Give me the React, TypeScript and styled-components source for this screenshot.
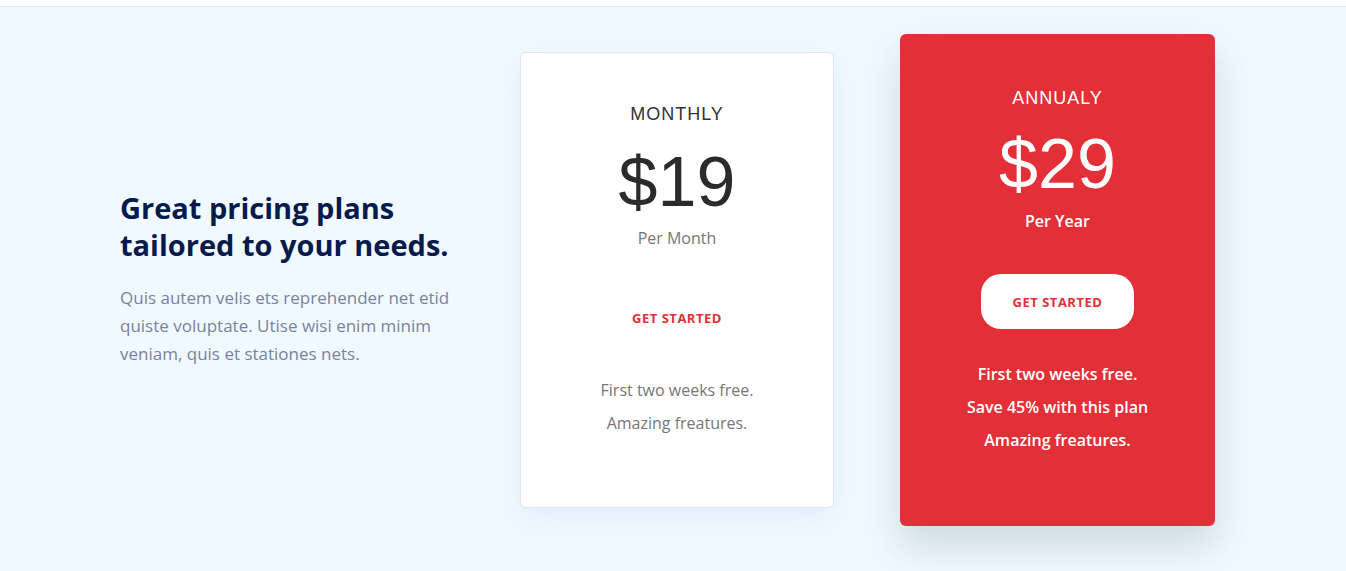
import { createGlobalStyle } from "styled-components";
import styled from "styled-components";

const GlobalStyle = createGlobalStyle`
  * {
    box-sizing: border-box;
  }
  body {
    margin: 0;
    background-color: #f0f9ff;
    font-family: "Open Sans", sans-serif;
  }
`;

const TopBar = styled.div`
  height: 7px;
  background-color: #ffffff;
  border-bottom: 1px solid #e6ebf0;
`;

const Section = styled.section`
  background-color: #f0f9ff;
  padding: 27px 0 60px;
`;

const Container = styled.div`
  display: flex;
  align-items: center;
  padding-left: 120px;
`;

const Intro = styled.div`
  width: 350px;
  margin-right: 50px;
  padding-bottom: 4px;
`;

const Heading = styled.h2`
  max-width: 345px;
  margin: 0 0 21px;
  font-family: "Open Sans", sans-serif;
  font-size: 29px;
  font-weight: 700;
  line-height: 37px;
  color: #061a4c;
`;

const Lead = styled.p`
  margin: 0;
  font-size: 17px;
  line-height: 28px;
  color: #7c819b;
`;

const Cards = styled.div`
  display: flex;
  align-items: center;
  gap: 66px;
`;

const Card = styled.div<{ $featured?: boolean }>`
  width: ${(p) => (p.$featured ? "315px" : "314px")};
  display: flex;
  flex-direction: column;
  align-items: center;
  text-align: center;
  padding: ${(p) => (p.$featured ? "52px 30px 69px" : "49px 30px 67px")};
  border-radius: 6px;
  background-color: ${(p) => (p.$featured ? "#e32f37" : "#ffffff")};
  border: ${(p) => (p.$featured ? "none" : "1px solid #dbe6f2")};
  box-shadow: ${(p) =>
    p.$featured
      ? "0 20px 40px rgba(40, 70, 90, 0.18)"
      : "0 10px 30px rgba(120, 160, 210, 0.12)"};
  color: ${(p) => (p.$featured ? "#ffffff" : "#777777")};
`;

const PlanName = styled.div<{ $featured?: boolean }>`
  font-family: "Liberation Sans", Arial, sans-serif;
  font-size: 18px;
  line-height: 24px;
  letter-spacing: 1px;
  color: ${(p) => (p.$featured ? "#ffffff" : "#333333")};
`;

const Price = styled.div<{ $featured?: boolean }>`
  margin-top: ${(p) => (p.$featured ? "14px" : "16px")};
  font-family: "Liberation Sans", Arial, sans-serif;
  font-size: 70px;
  line-height: 80px;
  color: ${(p) => (p.$featured ? "#ffffff" : "#2b2b2b")};
`;

const Period = styled.div<{ $featured?: boolean }>`
  margin-top: ${(p) => (p.$featured ? "5px" : "4px")};
  font-size: 16px;
  line-height: 24px;
  font-weight: ${(p) => (p.$featured ? 600 : 400)};
`;

const StartButton = styled.button<{ $featured?: boolean }>`
  margin-top: ${(p) => (p.$featured ? "41px" : "40px")};
  width: 153px;
  height: 55px;
  border: none;
  border-radius: 20px;
  background-color: ${(p) => (p.$featured ? "#ffffff" : "transparent")};
  color: #e32f37;
  font-family: "Open Sans", sans-serif;
  font-size: 13px;
  font-weight: 700;
  letter-spacing: 0.5px;
  cursor: pointer;
`;

const Features = styled.ul<{ $featured?: boolean }>`
  list-style: none;
  margin: 29px 0 0;
  padding: 0;
  font-size: 16px;
  line-height: 33px;
  font-weight: ${(p) => (p.$featured ? 600 : 400)};
`;

type Plan = {
  name: string;
  price: string;
  period: string;
  features: string[];
  featured?: boolean;
};

const plans: Plan[] = [
  {
    name: "MONTHLY",
    price: "$19",
    period: "Per Month",
    features: ["First two weeks free.", "Amazing freatures."],
  },
  {
    name: "ANNUALY",
    price: "$29",
    period: "Per Year",
    features: [
      "First two weeks free.",
      "Save 45% with this plan",
      "Amazing freatures.",
    ],
    featured: true,
  },
];

const App = () => {
  return (
    <>
      <GlobalStyle />
      <TopBar />
      <Section>
        <Container>
          <Intro>
            <Heading>Great pricing plans tailored to your needs.</Heading>
            <Lead>
              Quis autem velis ets reprehender net etid quiste voluptate. Utise
              wisi enim minim veniam, quis et stationes nets.
            </Lead>
          </Intro>
          <Cards>
            {plans.map((plan) => (
              <Card key={plan.name} $featured={plan.featured}>
                <PlanName $featured={plan.featured}>{plan.name}</PlanName>
                <Price $featured={plan.featured}>{plan.price}</Price>
                <Period $featured={plan.featured}>{plan.period}</Period>
                <StartButton $featured={plan.featured}>GET STARTED</StartButton>
                <Features $featured={plan.featured}>
                  {plan.features.map((f) => (
                    <li key={f}>{f}</li>
                  ))}
                </Features>
              </Card>
            ))}
          </Cards>
        </Container>
      </Section>
    </>
  );
};

export default App;
